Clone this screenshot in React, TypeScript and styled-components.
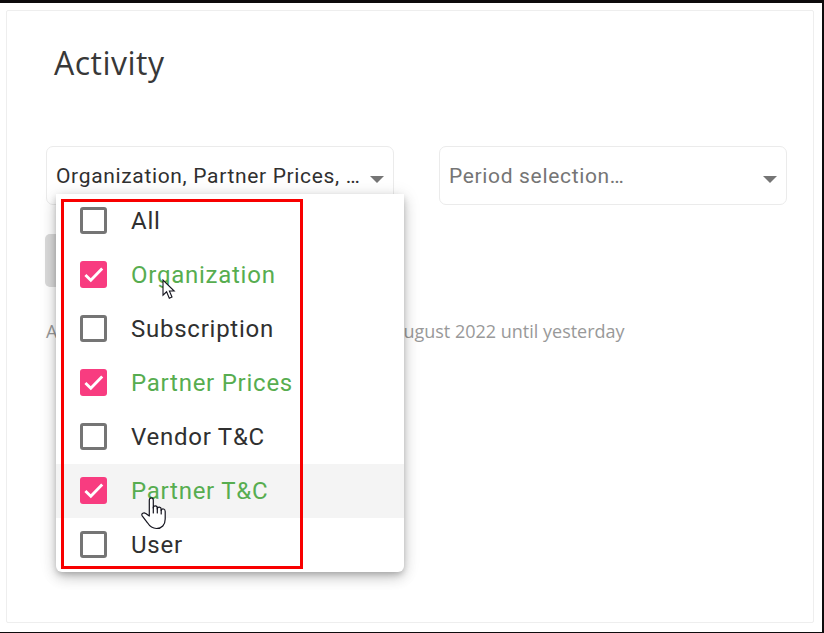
import React from "react";
import styled, { createGlobalStyle } from "styled-components";

const GlobalStyle = createGlobalStyle`
  * { box-sizing: border-box; }
  body { margin: 0; background: #fff; }
`;

const Frame = styled.div`
  height: 633px;
  width: 824px;
  padding: 7px 8px 9px 6px;
  border: solid #0d0b0c;
  border-width: 3px 2px 1px 0;
  background: #fff;
  overflow: hidden;
`;

const Card = styled.main`
  width: 808px;
  height: 613px;
  border: 1px solid #eeeeee;
  border-radius: 2px;
  padding: 28px 26px 0 39px;
  font-family: "Open Sans", "Noto Sans", sans-serif;
`;

const Title = styled.h1`
  margin: 0 0 0 8px;
  height: 107px;
  font-size: 32px;
  line-height: 48px;
  font-weight: 400;
  letter-spacing: 0.5px;
  color: #383838;
`;

const Filters = styled.div`
  display: flex;
  gap: 45px;
`;

const Field = styled.div`
  position: relative;
  width: 348px;
`;

const Select = styled.div<{ $muted?: boolean }>`
  display: flex;
  align-items: center;
  justify-content: space-between;
  height: 59px;
  padding: 0 9px;
  border: 1px solid #ebebeb;
  border-radius: 7px;
  font: 400 21px/28px Roboto, sans-serif;
  letter-spacing: 0.66px;
  white-space: nowrap;
  color: ${(p) => (p.$muted ? "#757575" : "#303030")};
`;

const Arrow = styled.span`
  margin-top: 7px;
  border: 7px solid transparent;
  border-top-color: #757575;
  border-bottom: 0;
`;

const Menu = styled.ul`
  position: absolute;
  z-index: 1;
  top: 48px;
  left: 10px;
  width: 348px;
  margin: 0;
  padding: 0;
  list-style: none;
  background: #fff;
  border-radius: 0 0 6px 6px;
  box-shadow: 0 3px 6px -1px rgba(0, 0, 0, 0.22), 0 6px 14px rgba(0, 0, 0, 0.14),
    0 2px 18px rgba(0, 0, 0, 0.12);
`;

const Option = styled.li<{ $checked: boolean; $hover: boolean }>`
  display: flex;
  align-items: center;
  gap: 24px;
  height: 54px;
  padding-left: 24px;
  background: ${(p) => (p.$hover ? "#f4f4f4" : "transparent")};
  color: ${(p) => (p.$checked ? "#57ad50" : "#303030")};
  font: 400 24px/32px Roboto, sans-serif;
  letter-spacing: 0.75px;
  white-space: nowrap;
`;

const Box = styled.span<{ $checked: boolean }>`
  display: flex;
  flex: none;
  width: 27px;
  height: 27px;
  margin-bottom: 1px;
  border: ${(p) => (p.$checked ? "0" : "3px solid #757575")};
  border-radius: 3px;
  background: ${(p) => (p.$checked ? "#f83c80" : "transparent")};
`;

const Highlight = styled.div`
  position: absolute;
  top: 5px;
  left: 5px;
  width: 242px;
  height: 370px;
  border: 3px solid #f80000;
  pointer-events: none;
`;

const Cursor = styled.svg<{ $x: number; $y: number }>`
  position: absolute;
  left: ${(p) => p.$x}px;
  top: ${(p) => p.$y}px;
`;

const Submit = styled.button`
  display: block;
  width: 120px;
  height: 53px;
  margin: 29px 0 0 -1px;
  border: 0;
  border-radius: 5px;
  background: #dadada;
`;

const Note = styled.p`
  display: flex;
  margin: 32px 0 0;
  font-size: 18px;
  line-height: 25px;
  color: #999;
  white-space: nowrap;
`;

const NoteLead = styled.span`
  width: 346px;
`;

const options = [
  { label: "All", checked: false },
  { label: "Organization", checked: true },
  { label: "Subscription", checked: false },
  { label: "Partner Prices", checked: true },
  { label: "Vendor T&C", checked: false },
  { label: "Partner T&C", checked: true, hover: true },
  { label: "User", checked: false },
];

const Check = () => (
  <svg width="27" height="27" viewBox="0 0 27 27" fill="none">
    <path d="M5.4 14 10.8 19.2 22.2 7.5" stroke="#fff" strokeWidth="2.9" />
  </svg>
);

export default function App() {
  return (
    <Frame>
      <GlobalStyle />
      <Card>
        <Title>Activity</Title>
        <Filters>
          <Field>
            <Select>
              Organization, Partner Prices, …
              <Arrow />
            </Select>
            <Menu>
              {options.map((o) => (
                <Option key={o.label} $checked={o.checked} $hover={!!o.hover}>
                  <Box $checked={o.checked}>{o.checked && <Check />}</Box>
                  {o.label}
                </Option>
              ))}
              <Highlight />
              <Cursor $x={106} $y={85} width="14" height="21" viewBox="0 0 14 21">
                <path
                  d="M1 1V16.2L4.6 12.8L7.3 19.2L10 18L7.4 12H12.2Z"
                  fill="#fff"
                  stroke="#15151f"
                  strokeWidth="1.1"
                />
              </Cursor>
              <Cursor $x={85} $y={303} width="26" height="33" viewBox="0 0 26 33">
                <path
                  d="M8.3 19V3.2C8.3.2 12.3.2 12.3 3.2V11C12.3 8 16.3 8.2 16.3 11V12C16.5 9.3 20.2 9.5 20.2 12.3V13.5C20.8 11.2 24.2 11.5 24.2 14.5V22C24.2 28 20.7 31.5 15.5 31.5C11 31.5 8.5 29 6.5 25.8L1.2 18.8C-.2 16.3 3 15 4.8 16.6Z"
                  fill="#fff"
                  stroke="#15151f"
                  strokeWidth="1.2"
                  strokeLinejoin="round"
                />
                <path
                  d="M12.3 10V16M16.3 11V16M20.2 12.5V17"
                  fill="none"
                  stroke="#15151f"
                  strokeWidth="1.2"
                  strokeLinecap="round"
                />
              </Cursor>
            </Menu>
          </Field>
          <Field>
            <Select $muted>
              Period selection…
              <Arrow />
            </Select>
          </Field>
        </Filters>
        <Submit aria-label="Show activity" />
        <Note>
          <NoteLead>Activity</NoteLead>
          <span>August 2022 until yesterday</span>
        </Note>
      </Card>
    </Frame>
  );
}
